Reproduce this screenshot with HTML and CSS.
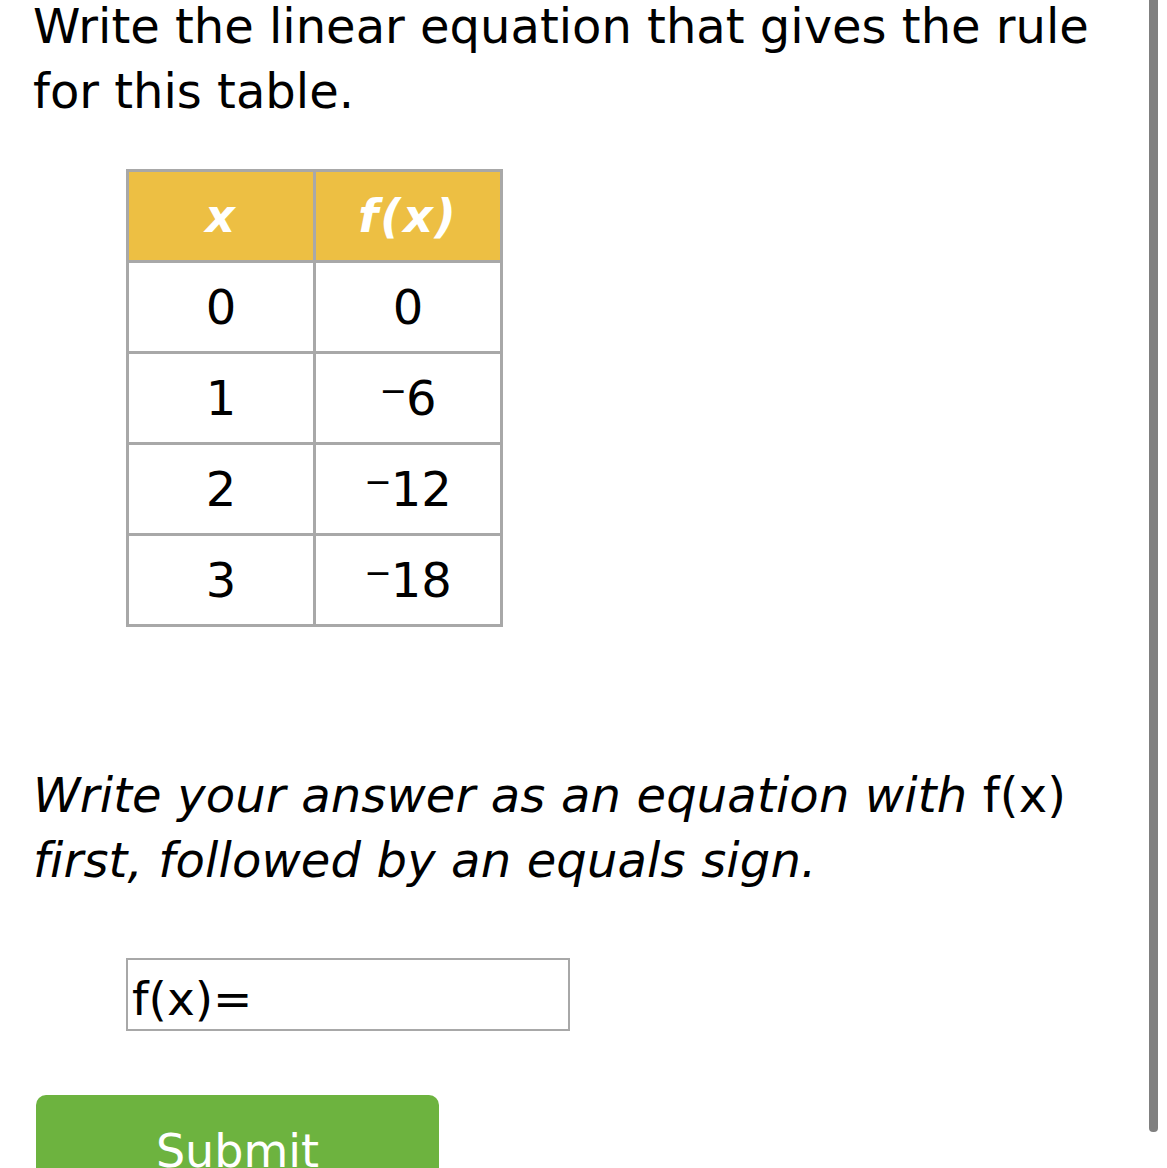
FILE: index.html
```html
<!DOCTYPE html>
<html lang="en">
<head>
<meta charset="utf-8">
<title>Linear equation</title>
<link rel="stylesheet" href="styles.css">
</head>
<body>
<main class="page">
  <h1 class="title">Write the linear equation that gives the rule for this table.</h1>
  <table class="data">
    <thead>
      <tr><th><i>x</i></th><th><i>f</i>(<i>x</i>)</th></tr>
    </thead>
    <tbody>
      <tr><td>0</td><td>0</td></tr>
      <tr><td>1</td><td><span class="neg">−</span>6</td></tr>
      <tr><td>2</td><td><span class="neg">−</span>12</td></tr>
      <tr><td>3</td><td><span class="neg">−</span>18</td></tr>
    </tbody>
  </table>
  <p class="instr"><em>Write your answer as an equation with</em> f(x) <em>first, followed by an equals sign.</em></p>
  <div class="answer"><span class="answer-text">f(x)=</span></div>
  <button class="submit" type="button">Submit</button>
</main>
<div class="scroll-indicator"></div>
</body>
</html>
```
FILE: styles.css
```css
html, body {
  margin: 0;
  padding: 0;
  background: #ffffff;
  overflow: hidden;
}
body {
  font-family: "DejaVu Sans", Verdana, sans-serif;
  color: #000;
}
.page {
  width: 1090px;
  padding-left: 33px;
  display: flex;
  flex-direction: column;
  align-items: flex-start;
}
.title {
  margin: -6px 0 0;
  font-size: 48px;
  font-weight: normal;
  line-height: 65px;
}
.data {
  margin: 45px 0 0 93px;
  border-collapse: collapse;
  border: 3px solid #a8a8a8;
}
.data th, .data td {
  border: 3px solid #a8a8a8;
  width: 184px;
  height: 88px;
  padding: 0;
  text-align: center;
  vertical-align: middle;
  box-sizing: content-box;
}
.data th {
  background: #edbf43;
  color: #fff;
  font-size: 46px;
  font-weight: bold;
  font-style: italic;
  line-height: 1;
  letter-spacing: 2px;
}
.data th i { font-style: italic; }
.data td {
  font-size: 48px;
  line-height: 1;
}
.neg {
  font-size: 33px;
  line-height: 0;
  vertical-align: 13px;
  margin-right: -1px;
}
.instr {
  margin: 136px 0 0;
  font-size: 48px;
  line-height: 65px;
  letter-spacing: 0.15px;
}
.instr em { font-style: italic; }
.answer {
  margin: 65px 0 0 93px;
  width: 444px;
  height: 73px;
  box-sizing: border-box;
  border: 2px solid #a8a8a8;
  padding: 11px 0 0 4px;
  font-size: 47px;
  line-height: normal;
}
.submit {
  margin: 64px 0 0 3px;
  width: 403px;
  height: 120px;
  box-sizing: border-box;
  border: none;
  border-radius: 10px;
  background: #6db33f;
  color: #fff;
  font-family: "DejaVu Sans", Verdana, sans-serif;
  font-size: 46px;
  line-height: normal;
  padding: 29px 0 0;
  display: flex;
  justify-content: center;
  align-items: flex-start;
}
.scroll-indicator {
  position: fixed;
  top: -10px;
  right: 9px;
  width: 9px;
  height: 1142px;
  background: #808080;
  border-radius: 0 0 4px 4px;
}
```
